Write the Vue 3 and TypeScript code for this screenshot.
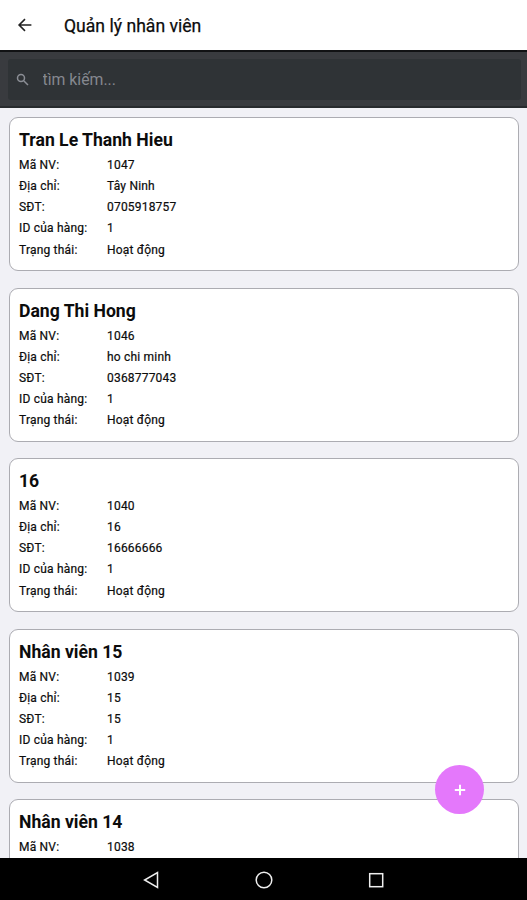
<script setup lang="ts">
import { ref } from 'vue'

interface Employee {
  name: string
  code: string
  address?: string
  phone?: string
  store?: string
  status?: string
}

const keyword = ref('')

const employees: Employee[] = [
  { name: 'Tran Le Thanh Hieu', code: '1047', address: 'Tây Ninh', phone: '0705918757', store: '1', status: 'Hoạt động' },
  { name: 'Dang Thi Hong', code: '1046', address: 'ho chi minh', phone: '0368777043', store: '1', status: 'Hoạt động' },
  { name: '16', code: '1040', address: '16', phone: '16666666', store: '1', status: 'Hoạt động' },
  { name: 'Nhân viên 15', code: '1039', address: '15', phone: '15', store: '1', status: 'Hoạt động' },
  { name: 'Nhân viên 14', code: '1038' },
]

const rows = (e: Employee) =>
  [
    { label: 'Mã NV:', value: e.code },
    { label: 'Địa chỉ:', value: e.address },
    { label: 'SĐT:', value: e.phone },
    { label: 'ID của hàng:', value: e.store },
    { label: 'Trạng thái:', value: e.status },
  ].filter((row) => row.value !== undefined)
</script>

<template>
  <div class="screen">
    <header class="topbar">
      <svg class="back" viewBox="0 0 16 16" width="16" height="16">
        <path d="M14.4 8H2.4M8 2.1L2.1 8L8 13.9" />
      </svg>
      <h1>Quản lý nhân viên</h1>
    </header>
    <div class="searchbar">
      <label class="search">
        <svg viewBox="0 0 14 14" width="14" height="14">
          <circle cx="5" cy="5" r="3.5" />
          <path d="M7.7 7.7L12 12" />
        </svg>
        <input v-model="keyword" type="text" placeholder="tìm kiếm..." />
      </label>
    </div>
    <main class="list">
      <article v-for="e in employees" :key="e.code" class="card">
        <h2>{{ e.name }}</h2>
        <dl>
          <div v-for="row in rows(e)" :key="row.label" class="row">
            <dt>{{ row.label }}</dt>
            <dd>{{ row.value }}</dd>
          </div>
        </dl>
      </article>
    </main>
    <button class="fab" aria-label="Thêm nhân viên">
      <svg viewBox="0 0 12 12" width="12" height="12"><path d="M6 0.8V11.2M0.8 6H11.2" /></svg>
    </button>
    <nav class="navbar">
      <svg viewBox="0 0 18 18" width="18" height="18"><path d="M15.5 1.6V16.4L2.6 9Z" /></svg>
      <svg viewBox="0 0 18 18" width="18" height="18"><circle cx="9" cy="9" r="7.8" /></svg>
      <svg viewBox="0 0 18 18" width="18" height="18"><rect x="2.7" y="2.7" width="13" height="13" /></svg>
    </nav>
  </div>
</template>

<style>
body {
  margin: 0;
  overflow: hidden;
}
</style>

<style scoped>
.screen {
  position: relative;
  display: flex;
  flex-direction: column;
  width: 527px;
  height: 900px;
  overflow: hidden;
  background: #f1f1f6;
  color: #0c0c0c;
  font-family: Roboto, "Noto Sans", sans-serif;
}
.topbar {
  display: flex;
  flex: none;
  align-items: center;
  gap: 31px;
  height: 50px;
  padding-left: 17px;
  background: #fff;
}
.back {
  fill: none;
  stroke: #222;
  stroke-width: 1.6;
}
h1 {
  margin: 1px 0 0;
  font-size: 17.6px;
  font-weight: 400;
  line-height: 24px;
  -webkit-text-stroke: 0.25px #0c0c0c;
}
.searchbar {
  flex: none;
  box-sizing: border-box;
  height: 58px;
  padding: 7px 6px 0 8px;
  border-top: 2px solid #111214;
  border-bottom: 2px solid #282b2e;
  background: #393b3f;
}
.search {
  display: flex;
  align-items: center;
  gap: 13px;
  height: 41px;
  padding-left: 7.5px;
  border-radius: 3px;
  background: #2f3336;
}
.search svg {
  fill: none;
  stroke: #8b8e95;
  stroke-width: 1.5;
}
.search input {
  flex: 1;
  min-width: 0;
  padding: 0;
  border: 0;
  outline: 0;
  background: transparent;
  color: #d5d6da;
  font: 400 15.8px/24px Roboto, "Noto Sans", sans-serif;
}
.search input::placeholder {
  color: #85888f;
  opacity: 1;
}
.list {
  display: flex;
  flex: 1;
  flex-direction: column;
  gap: 16.5px;
  min-height: 0;
  padding: 9px 8px 0 9px;
  overflow: hidden;
}
.card {
  flex: none;
  box-sizing: border-box;
  height: 154px;
  padding: 10px 9px 0;
  border: 1px solid #acacb2;
  border-radius: 9px;
  background: #fff;
}
h2 {
  margin: 0 0 3px;
  font-size: 17.6px;
  font-weight: 700;
  line-height: 24px;
}
dl {
  margin: 0;
}
.row {
  display: flex;
  height: 21.15px;
  font-size: 12px;
  line-height: 21.15px;
  letter-spacing: 0.2px;
  -webkit-text-stroke: 0.2px #0c0c0c;
}
dt {
  flex: none;
  width: 88px;
}
dd {
  margin: 0;
}
.fab {
  position: absolute;
  right: 43px;
  bottom: 86px;
  display: flex;
  align-items: center;
  justify-content: center;
  width: 49px;
  height: 49px;
  padding: 0;
  border: 0;
  border-radius: 50%;
  background: #e478fb;
}
.fab svg {
  fill: none;
  stroke: #fff;
  stroke-width: 2;
}
.navbar {
  display: flex;
  flex: none;
  align-items: center;
  justify-content: center;
  gap: 94.5px;
  height: 42px;
  padding-top: 1px;
  box-sizing: border-box;
  background: #000;
}
.navbar svg {
  fill: none;
  stroke: #eee;
  stroke-width: 1.5;
}
</style>
